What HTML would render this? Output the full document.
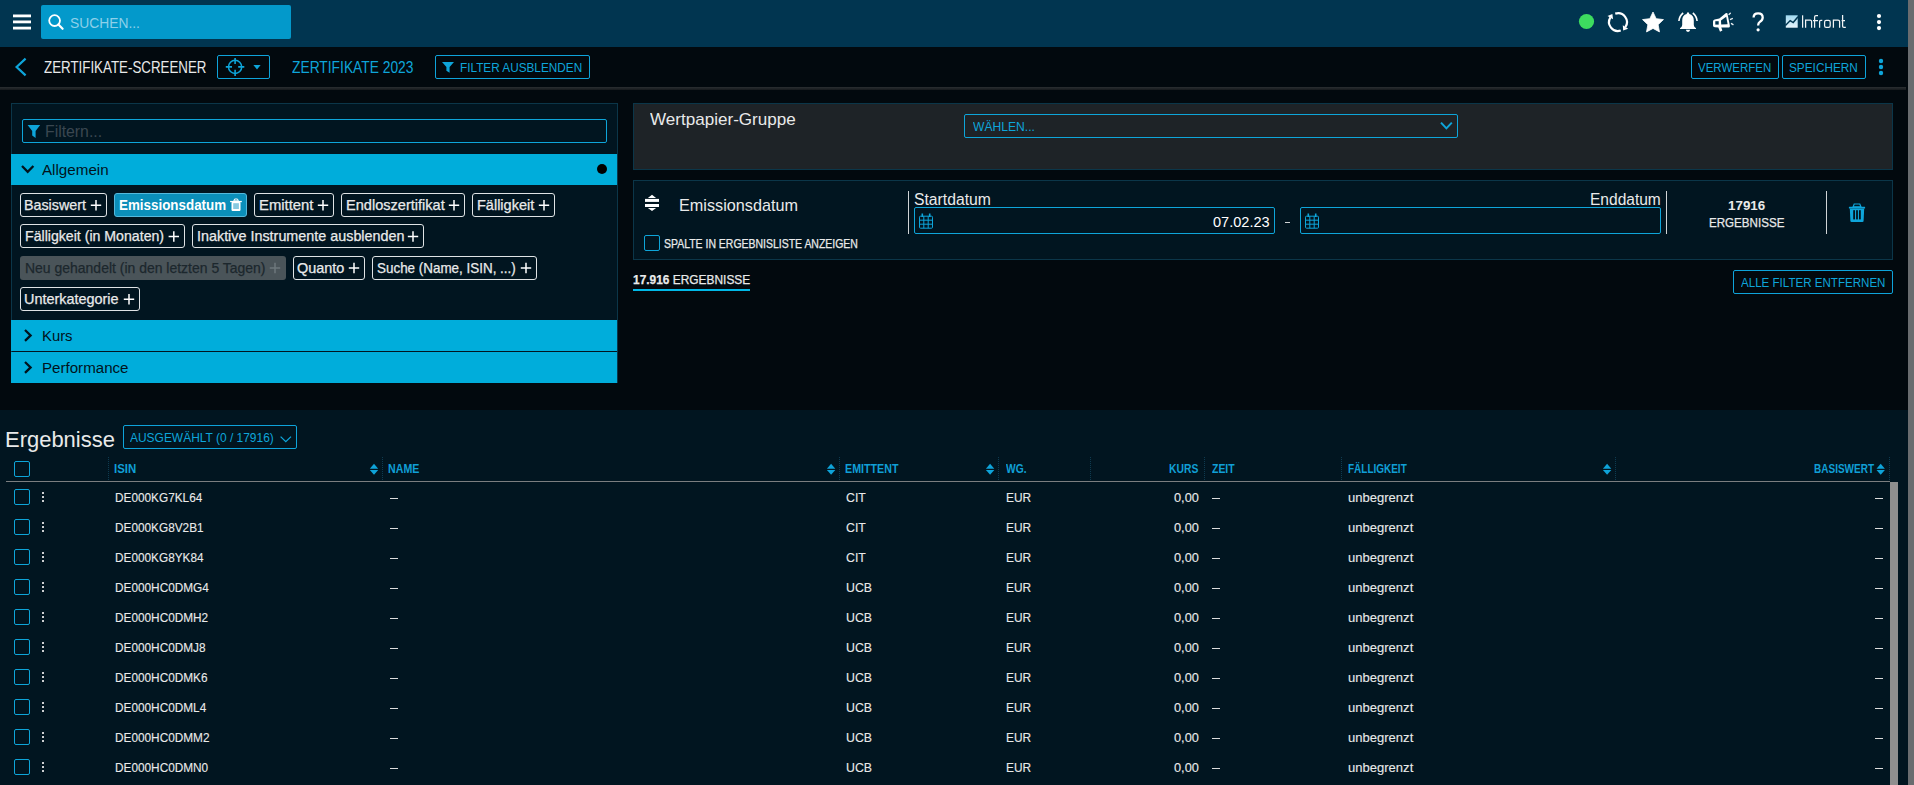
<!DOCTYPE html>
<html><head><meta charset="utf-8"><style>
html,body{margin:0;padding:0;width:1914px;height:785px;overflow:hidden;background:#02090e}
.b{position:absolute}
.t{position:absolute;white-space:pre;line-height:1;font-family:"Liberation Sans",sans-serif;transform-origin:0 0}
svg{position:absolute;left:0;top:0}
</style></head><body>
<div class="b" style="left:0px;top:0px;width:1908px;height:47px;background:#013550"></div><div class="b" style="left:41px;top:5px;width:250px;height:34px;background:#0399cb;border-radius:2px"></div><div class="b" style="left:0px;top:47px;width:1908px;height:40px;background:#02090e"></div><div class="b" style="left:0px;top:87px;width:1906px;height:3px;background:linear-gradient(#2b2f32,#15191c)"></div><div class="b" style="left:0px;top:90px;width:1908px;height:320px;background:#02090e"></div><div class="b" style="left:0px;top:410px;width:1908px;height:375px;background:#011520"></div><div class="b" style="left:1908px;top:0px;width:6px;height:785px;background:#696c6f"></div><div class="b" style="left:217px;top:55px;width:53px;height:24px;border:1.5px solid #0ea3da;border-radius:2px;box-sizing:border-box"></div><div class="b" style="left:435px;top:55px;width:155px;height:24px;border:1.5px solid #0ea3da;border-radius:2px;box-sizing:border-box"></div><div class="b" style="left:1691px;top:55px;width:88px;height:24px;border:1.5px solid #0ea3da;border-radius:2px;box-sizing:border-box"></div><div class="b" style="left:1782px;top:55px;width:84px;height:24px;border:1.5px solid #0ea3da;border-radius:2px;box-sizing:border-box"></div><div class="b" style="left:11px;top:103px;width:607px;height:280px;background:#011520;border:1px solid #0b3649;box-sizing:border-box"></div><div class="b" style="left:22px;top:119px;width:585px;height:24px;border:1.5px solid #0ea5d9;border-radius:2px;box-sizing:border-box"></div><div class="b" style="left:11px;top:154px;width:606px;height:31px;background:#00addb"></div><div class="b" style="left:11px;top:320px;width:606px;height:31px;background:#00addb"></div><div class="b" style="left:11px;top:352px;width:606px;height:31px;background:#00addb"></div><div class="b" style="left:20px;top:193px;width:87px;height:24px;border:1px solid #dfe3e5;border-radius:3px;box-sizing:border-box"></div><div class="b" style="left:114px;top:193px;width:133px;height:24px;background:#0b8fba;border:1px solid #55b9dc;border-radius:3px;box-sizing:border-box"></div><div class="b" style="left:254px;top:193px;width:80px;height:24px;border:1px solid #dfe3e5;border-radius:3px;box-sizing:border-box"></div><div class="b" style="left:341px;top:193px;width:124px;height:24px;border:1px solid #dfe3e5;border-radius:3px;box-sizing:border-box"></div><div class="b" style="left:472px;top:193px;width:83px;height:24px;border:1px solid #dfe3e5;border-radius:3px;box-sizing:border-box"></div><div class="b" style="left:20px;top:224px;width:165px;height:24px;border:1px solid #dfe3e5;border-radius:3px;box-sizing:border-box"></div><div class="b" style="left:192px;top:224px;width:232px;height:24px;border:1px solid #dfe3e5;border-radius:3px;box-sizing:border-box"></div><div class="b" style="left:20px;top:256px;width:266px;height:24px;background:#4a5459;border-radius:3px"></div><div class="b" style="left:293px;top:256px;width:72px;height:24px;border:1px solid #dfe3e5;border-radius:3px;box-sizing:border-box"></div><div class="b" style="left:372px;top:256px;width:165px;height:24px;border:1px solid #dfe3e5;border-radius:3px;box-sizing:border-box"></div><div class="b" style="left:20px;top:287px;width:120px;height:24px;border:1px solid #dfe3e5;border-radius:3px;box-sizing:border-box"></div><div class="b" style="left:633px;top:103px;width:1260px;height:67px;background:#1e2327;border:1px solid #0b3649;box-sizing:border-box"></div><div class="b" style="left:964px;top:114px;width:494px;height:24px;border:1.5px solid #0ea5d9;border-radius:2px;box-sizing:border-box"></div><div class="b" style="left:633px;top:180px;width:1260px;height:80px;background:#011520;border:1px solid #0b3649;box-sizing:border-box"></div><div class="b" style="left:908px;top:191px;width:1px;height:43px;background:#d0d4d6"></div><div class="b" style="left:1666px;top:191px;width:1px;height:43px;background:#d0d4d6"></div><div class="b" style="left:1826px;top:191px;width:1px;height:43px;background:#d0d4d6"></div><div class="b" style="left:914px;top:207px;width:361px;height:27px;border:1.5px solid #0ea5d9;border-radius:2px;box-sizing:border-box"></div><div class="b" style="left:1300px;top:207px;width:361px;height:27px;border:1.5px solid #0ea5d9;border-radius:2px;box-sizing:border-box"></div><div class="b" style="left:1285px;top:222px;width:5px;height:1px;background:#cfd3d5"></div><div class="b" style="left:644px;top:235px;width:16px;height:16px;border:1.5px solid #0ea5d9;border-radius:2px;box-sizing:border-box"></div><div class="b" style="left:633px;top:289px;width:117px;height:2px;background:#00b9e8"></div><div class="b" style="left:1733px;top:270px;width:160px;height:24px;border:1.5px solid #0ea3da;border-radius:2px;box-sizing:border-box"></div><div class="b" style="left:123px;top:425px;width:174px;height:24px;border:1.5px solid #0ea3da;border-radius:2px;box-sizing:border-box"></div><div class="b" style="left:14px;top:461px;width:16px;height:16px;border:1.5px solid #0ea5d9;border-radius:2px;box-sizing:border-box"></div><div class="b" style="left:6px;top:481px;width:1884px;height:1px;background:#7b7e80"></div><div class="b" style="left:1890px;top:482px;width:8px;height:303px;background:#8f8f8f"></div><div class="b" style="left:108px;top:457px;width:1px;height:24px;background:repeating-linear-gradient(#0e3b50 0 1px,transparent 1px 2px)"></div><div class="b" style="left:382px;top:457px;width:1px;height:24px;background:repeating-linear-gradient(#0e3b50 0 1px,transparent 1px 2px)"></div><div class="b" style="left:839px;top:457px;width:1px;height:24px;background:repeating-linear-gradient(#0e3b50 0 1px,transparent 1px 2px)"></div><div class="b" style="left:998px;top:457px;width:1px;height:24px;background:repeating-linear-gradient(#0e3b50 0 1px,transparent 1px 2px)"></div><div class="b" style="left:1090px;top:457px;width:1px;height:24px;background:repeating-linear-gradient(#0e3b50 0 1px,transparent 1px 2px)"></div><div class="b" style="left:1204px;top:457px;width:1px;height:24px;background:repeating-linear-gradient(#0e3b50 0 1px,transparent 1px 2px)"></div><div class="b" style="left:1341px;top:457px;width:1px;height:24px;background:repeating-linear-gradient(#0e3b50 0 1px,transparent 1px 2px)"></div><div class="b" style="left:1615px;top:457px;width:1px;height:24px;background:repeating-linear-gradient(#0e3b50 0 1px,transparent 1px 2px)"></div><div class="b" style="left:1889px;top:457px;width:1px;height:24px;background:repeating-linear-gradient(#0e3b50 0 1px,transparent 1px 2px)"></div><div class="b" style="left:14px;top:489px;width:16px;height:16px;border:1.5px solid #0ea5d9;border-radius:2px;box-sizing:border-box"></div><div class="b" style="left:41.8px;top:491.8px;width:2.6px;height:2.6px;background:#f4f4f4;border-radius:0.8px"></div><div class="b" style="left:41.8px;top:495.8px;width:2.6px;height:2.6px;background:#f4f4f4;border-radius:0.8px"></div><div class="b" style="left:41.8px;top:499.8px;width:2.6px;height:2.6px;background:#f4f4f4;border-radius:0.8px"></div><div class="b" style="left:390px;top:498px;width:8px;height:1.3px;background:#dcdcdc"></div><div class="b" style="left:1212px;top:498px;width:8px;height:1.3px;background:#dcdcdc"></div><div class="b" style="left:1875px;top:498px;width:8px;height:1.3px;background:#dcdcdc"></div><div class="b" style="left:14px;top:519px;width:16px;height:16px;border:1.5px solid #0ea5d9;border-radius:2px;box-sizing:border-box"></div><div class="b" style="left:41.8px;top:521.8px;width:2.6px;height:2.6px;background:#f4f4f4;border-radius:0.8px"></div><div class="b" style="left:41.8px;top:525.8px;width:2.6px;height:2.6px;background:#f4f4f4;border-radius:0.8px"></div><div class="b" style="left:41.8px;top:529.8px;width:2.6px;height:2.6px;background:#f4f4f4;border-radius:0.8px"></div><div class="b" style="left:390px;top:528px;width:8px;height:1.3px;background:#dcdcdc"></div><div class="b" style="left:1212px;top:528px;width:8px;height:1.3px;background:#dcdcdc"></div><div class="b" style="left:1875px;top:528px;width:8px;height:1.3px;background:#dcdcdc"></div><div class="b" style="left:14px;top:549px;width:16px;height:16px;border:1.5px solid #0ea5d9;border-radius:2px;box-sizing:border-box"></div><div class="b" style="left:41.8px;top:551.8px;width:2.6px;height:2.6px;background:#f4f4f4;border-radius:0.8px"></div><div class="b" style="left:41.8px;top:555.8px;width:2.6px;height:2.6px;background:#f4f4f4;border-radius:0.8px"></div><div class="b" style="left:41.8px;top:559.8px;width:2.6px;height:2.6px;background:#f4f4f4;border-radius:0.8px"></div><div class="b" style="left:390px;top:558px;width:8px;height:1.3px;background:#dcdcdc"></div><div class="b" style="left:1212px;top:558px;width:8px;height:1.3px;background:#dcdcdc"></div><div class="b" style="left:1875px;top:558px;width:8px;height:1.3px;background:#dcdcdc"></div><div class="b" style="left:14px;top:579px;width:16px;height:16px;border:1.5px solid #0ea5d9;border-radius:2px;box-sizing:border-box"></div><div class="b" style="left:41.8px;top:581.8px;width:2.6px;height:2.6px;background:#f4f4f4;border-radius:0.8px"></div><div class="b" style="left:41.8px;top:585.8px;width:2.6px;height:2.6px;background:#f4f4f4;border-radius:0.8px"></div><div class="b" style="left:41.8px;top:589.8px;width:2.6px;height:2.6px;background:#f4f4f4;border-radius:0.8px"></div><div class="b" style="left:390px;top:588px;width:8px;height:1.3px;background:#dcdcdc"></div><div class="b" style="left:1212px;top:588px;width:8px;height:1.3px;background:#dcdcdc"></div><div class="b" style="left:1875px;top:588px;width:8px;height:1.3px;background:#dcdcdc"></div><div class="b" style="left:14px;top:609px;width:16px;height:16px;border:1.5px solid #0ea5d9;border-radius:2px;box-sizing:border-box"></div><div class="b" style="left:41.8px;top:611.8px;width:2.6px;height:2.6px;background:#f4f4f4;border-radius:0.8px"></div><div class="b" style="left:41.8px;top:615.8px;width:2.6px;height:2.6px;background:#f4f4f4;border-radius:0.8px"></div><div class="b" style="left:41.8px;top:619.8px;width:2.6px;height:2.6px;background:#f4f4f4;border-radius:0.8px"></div><div class="b" style="left:390px;top:618px;width:8px;height:1.3px;background:#dcdcdc"></div><div class="b" style="left:1212px;top:618px;width:8px;height:1.3px;background:#dcdcdc"></div><div class="b" style="left:1875px;top:618px;width:8px;height:1.3px;background:#dcdcdc"></div><div class="b" style="left:14px;top:639px;width:16px;height:16px;border:1.5px solid #0ea5d9;border-radius:2px;box-sizing:border-box"></div><div class="b" style="left:41.8px;top:641.8px;width:2.6px;height:2.6px;background:#f4f4f4;border-radius:0.8px"></div><div class="b" style="left:41.8px;top:645.8px;width:2.6px;height:2.6px;background:#f4f4f4;border-radius:0.8px"></div><div class="b" style="left:41.8px;top:649.8px;width:2.6px;height:2.6px;background:#f4f4f4;border-radius:0.8px"></div><div class="b" style="left:390px;top:648px;width:8px;height:1.3px;background:#dcdcdc"></div><div class="b" style="left:1212px;top:648px;width:8px;height:1.3px;background:#dcdcdc"></div><div class="b" style="left:1875px;top:648px;width:8px;height:1.3px;background:#dcdcdc"></div><div class="b" style="left:14px;top:669px;width:16px;height:16px;border:1.5px solid #0ea5d9;border-radius:2px;box-sizing:border-box"></div><div class="b" style="left:41.8px;top:671.8px;width:2.6px;height:2.6px;background:#f4f4f4;border-radius:0.8px"></div><div class="b" style="left:41.8px;top:675.8px;width:2.6px;height:2.6px;background:#f4f4f4;border-radius:0.8px"></div><div class="b" style="left:41.8px;top:679.8px;width:2.6px;height:2.6px;background:#f4f4f4;border-radius:0.8px"></div><div class="b" style="left:390px;top:678px;width:8px;height:1.3px;background:#dcdcdc"></div><div class="b" style="left:1212px;top:678px;width:8px;height:1.3px;background:#dcdcdc"></div><div class="b" style="left:1875px;top:678px;width:8px;height:1.3px;background:#dcdcdc"></div><div class="b" style="left:14px;top:699px;width:16px;height:16px;border:1.5px solid #0ea5d9;border-radius:2px;box-sizing:border-box"></div><div class="b" style="left:41.8px;top:701.8px;width:2.6px;height:2.6px;background:#f4f4f4;border-radius:0.8px"></div><div class="b" style="left:41.8px;top:705.8px;width:2.6px;height:2.6px;background:#f4f4f4;border-radius:0.8px"></div><div class="b" style="left:41.8px;top:709.8px;width:2.6px;height:2.6px;background:#f4f4f4;border-radius:0.8px"></div><div class="b" style="left:390px;top:708px;width:8px;height:1.3px;background:#dcdcdc"></div><div class="b" style="left:1212px;top:708px;width:8px;height:1.3px;background:#dcdcdc"></div><div class="b" style="left:1875px;top:708px;width:8px;height:1.3px;background:#dcdcdc"></div><div class="b" style="left:14px;top:729px;width:16px;height:16px;border:1.5px solid #0ea5d9;border-radius:2px;box-sizing:border-box"></div><div class="b" style="left:41.8px;top:731.8px;width:2.6px;height:2.6px;background:#f4f4f4;border-radius:0.8px"></div><div class="b" style="left:41.8px;top:735.8px;width:2.6px;height:2.6px;background:#f4f4f4;border-radius:0.8px"></div><div class="b" style="left:41.8px;top:739.8px;width:2.6px;height:2.6px;background:#f4f4f4;border-radius:0.8px"></div><div class="b" style="left:390px;top:738px;width:8px;height:1.3px;background:#dcdcdc"></div><div class="b" style="left:1212px;top:738px;width:8px;height:1.3px;background:#dcdcdc"></div><div class="b" style="left:1875px;top:738px;width:8px;height:1.3px;background:#dcdcdc"></div><div class="b" style="left:14px;top:759px;width:16px;height:16px;border:1.5px solid #0ea5d9;border-radius:2px;box-sizing:border-box"></div><div class="b" style="left:41.8px;top:761.8px;width:2.6px;height:2.6px;background:#f4f4f4;border-radius:0.8px"></div><div class="b" style="left:41.8px;top:765.8px;width:2.6px;height:2.6px;background:#f4f4f4;border-radius:0.8px"></div><div class="b" style="left:41.8px;top:769.8px;width:2.6px;height:2.6px;background:#f4f4f4;border-radius:0.8px"></div><div class="b" style="left:390px;top:768px;width:8px;height:1.3px;background:#dcdcdc"></div><div class="b" style="left:1212px;top:768px;width:8px;height:1.3px;background:#dcdcdc"></div><div class="b" style="left:1875px;top:768px;width:8px;height:1.3px;background:#dcdcdc"></div>
<svg width="1914" height="785" viewBox="0 0 1914 785"><rect x="13" y="14.5" width="18" height="2.8" fill="#ffffff"/><rect x="13" y="20.5" width="18" height="2.8" fill="#ffffff"/><rect x="13" y="26.7" width="18" height="2.8" fill="#ffffff"/><circle cx="54.6" cy="20.6" r="5.4" fill="none" stroke="#ffffff" stroke-width="1.8"/><line x1="58.4" y1="24.5" x2="62.6" y2="28.8" stroke="#ffffff" stroke-width="2.2" stroke-linecap="round"/><circle cx="1586.5" cy="21.5" r="7.6" fill="#3ddc5f"/><path d="M1615.25,13.64 A8.9,8.9 0 0 1 1625.29,27.20 M1620.75,30.56 A8.9,8.9 0 0 1 1610.45,17.38" fill="none" stroke="#ffffff" stroke-width="2.2"/><polygon points="1623.18,30.47 1628.15,28.69 1622.78,25.20" fill="#ffffff"/><polygon points="1612.39,14.01 1607.52,16.05 1613.06,19.25" fill="#ffffff"/><polygon points="1653.00,12.00 1656.17,18.63 1663.46,19.60 1658.14,24.67 1659.47,31.90 1653.00,28.40 1646.53,31.90 1647.86,24.67 1642.54,19.60 1649.83,18.63" fill="#ffffff" stroke="#ffffff" stroke-width="0.8" stroke-linejoin="round"/><path d="M1688,12.2 Q1689.3,12.2 1689.3,14 Q1693.8,15.2 1693.8,20.5 L1693.8,25 Q1693.8,26.8 1696,28.2 L1696,29 L1680,29 L1680,28.2 Q1682.2,26.8 1682.2,25 L1682.2,20.5 Q1682.2,15.2 1686.7,14 Q1686.7,12.2 1688,12.2 Z" fill="#ffffff"/><path d="M1685.9,29.8 L1690.1,29.8 Q1690,31.9 1688,31.9 Q1686,31.9 1685.9,29.8 Z" fill="#ffffff"/><path d="M1683.2,13 Q1679.4,15.8 1678.9,21" fill="none" stroke="#ffffff" stroke-width="1.6"/><path d="M1692.8,13 Q1696.6,15.8 1697.1,21" fill="none" stroke="#ffffff" stroke-width="1.6"/><path d="M1713,21.6 Q1713,19.9 1714.6,19.6 L1719.3,18.6 L1726,13 L1727.4,13.3 L1730,26.3 L1729.2,27.4 L1721.3,27.4 L1722.4,30.6 L1720,31.7 L1718.3,27.4 L1714.8,27.2 Q1713,27 1713,25.4 Z" fill="#ffffff"/><rect x="1715.3" y="21.2" width="3.4" height="3.4" fill="#013550"/><polygon points="1721,20.6 1726.2,16.8 1727.6,24.3 1721.2,24.4" fill="#013550"/><line x1="1729" y1="14.4" x2="1730.3" y2="13.2" stroke="#e8eef2" stroke-width="1.4" stroke-linecap="round"/><line x1="1730.5" y1="19.4" x2="1732.3" y2="18.6" stroke="#e8eef2" stroke-width="1.4" stroke-linecap="round"/><line x1="1731.5" y1="23.6" x2="1733" y2="24.6" stroke="#e8eef2" stroke-width="1.4" stroke-linecap="round"/><path d="M1753.6,17.6 Q1753.6,13.4 1758.1,13.4 Q1762.7,13.4 1762.7,17.5 Q1762.7,20.2 1760,21.7 Q1758.1,22.8 1758.1,25.6" fill="none" stroke="#ffffff" stroke-width="2.3"/><circle cx="1758.1" cy="29.8" r="1.6" fill="#ffffff"/><defs><linearGradient id="lg" x1="0" y1="0" x2="0" y2="1"><stop offset="0" stop-color="#9fd8ef"/><stop offset="1" stop-color="#e9f5fb"/></linearGradient></defs><rect x="1785.8" y="15.3" width="11.9" height="12.4" fill="url(#lg)"/><polyline points="1785.4,25.6 1790.2,20.6 1793.2,22.6 1798,16.8" fill="none" stroke="#013550" stroke-width="1.5"/><g fill="none" stroke="#f2f4f5" stroke-width="1.25"><path d="M1802.6,15.3 V27.7"/><path d="M1805.6,27.7 V20.2 H1810.2 Q1811.6,20.2 1811.6,21.6 V27.7"/><path d="M1818,15.7 H1816 Q1814.6,15.7 1814.6,17.1 V27.7 M1813,20.6 H1818"/><path d="M1819.6,27.7 V21.6 Q1819.6,20.4 1820.8,20.4 H1822.3"/><rect x="1824.6" y="20.4" width="5.6" height="7" rx="1.6"/><path d="M1833.4,27.7 V20.2 H1838 Q1839.6,20.2 1839.6,21.6 V27.7"/><path d="M1842.6,15.1 V26.3 Q1842.6,27.4 1844,27.4 H1845.8 M1841.6,20.6 H1845"/></g><circle cx="1879" cy="16" r="2.1" fill="#ffffff"/><circle cx="1879" cy="22.1" r="2.1" fill="#ffffff"/><circle cx="1879" cy="28.1" r="2.1" fill="#ffffff"/><polyline points="25.6,58.6 16.6,67 25.6,75.4" fill="none" stroke="#0ea5da" stroke-width="2.2"/><circle cx="235.1" cy="66.9" r="6.6" fill="none" stroke="#0ea5da" stroke-width="1.5"/><path d="M235.1,57.9 V64 M235.1,69.8 V75.9 M225.8,66.9 H232 M238.2,66.9 H244.3" stroke="#0ea5da" stroke-width="1.6"/><polygon points="253.4,65 260.6,65 257,69.6" fill="#0ea5da"/><polygon points="442,62 454,62 449.6,67 449.6,72.8 446.4,70.8 446.4,67" fill="#0ea5da"/><circle cx="1881" cy="61" r="2.2" fill="#0ea5da"/><circle cx="1881" cy="67" r="2.2" fill="#0ea5da"/><circle cx="1881" cy="73" r="2.2" fill="#0ea5da"/><polygon points="27.6,125 40.2,125 35.6,131 35.6,138 32.2,135.6 32.2,131" fill="#0ea5da"/><polyline points="22,166 27.7,171.8 33.4,166" fill="none" stroke="#02131c" stroke-width="2.3"/><circle cx="602" cy="169" r="5" fill="#000"/><polyline points="25,330 30.6,335.4 25,340.8" fill="none" stroke="#02131c" stroke-width="2.3"/><polyline points="25,362 30.6,367.4 25,372.8" fill="none" stroke="#02131c" stroke-width="2.3"/><path d="M90.8,205.3 H101.2 M96,200.10000000000002 V210.5" stroke="#ffffff" stroke-width="1.5"/><path d="M317.8,205.3 H328.2 M323,200.10000000000002 V210.5" stroke="#ffffff" stroke-width="1.5"/><path d="M448.8,205.3 H459.2 M454,200.10000000000002 V210.5" stroke="#ffffff" stroke-width="1.5"/><path d="M538.8,205.3 H549.2 M544,200.10000000000002 V210.5" stroke="#ffffff" stroke-width="1.5"/><path d="M168.60000000000002,236.5 H179.0 M173.8,231.3 V241.7" stroke="#ffffff" stroke-width="1.5"/><path d="M407.8,236.5 H418.2 M413,231.3 V241.7" stroke="#ffffff" stroke-width="1.5"/><path d="M269.8,268 H280.2 M275,262.8 V273.2" stroke="#6d777c" stroke-width="1.5"/><path d="M348.8,268 H359.2 M354,262.8 V273.2" stroke="#ffffff" stroke-width="1.5"/><path d="M520.8,268 H531.2 M526,262.8 V273.2" stroke="#ffffff" stroke-width="1.5"/><path d="M123.8,299.3 H134.2 M129,294.1 V304.5" stroke="#ffffff" stroke-width="1.5"/><g fill="#ffffff"><rect x="230.1" y="200.9" width="11.7" height="1.3"/><path d="M233.8,200.9 L234.6,199 H237.5 L238.3,200.9 Z" fill="none" stroke="#fff" stroke-width="1"/><rect x="231.5" y="202" width="9" height="8.9" rx="0.8"/></g><rect x="233.2" y="203.2" width="5.7" height="5.8" fill="#86c9e0"/><polyline points="1441,122.6 1446.4,128.4 1451.8,122.6" fill="none" stroke="#0ea5da" stroke-width="2"/><g fill="#ffffff"><polygon points="647.9,197.9 652,194.7 656.1,197.9"/><rect x="645" y="198.9" width="14" height="3"/><rect x="645" y="204" width="14" height="3"/><polygon points="647.9,207.9 656.1,207.9 652,211.1"/></g><g fill="none" stroke="#0ea5da" stroke-width="1"><rect x="919.5" y="216.2" width="13" height="12" rx="1"/><path d="M923.8,216.2 V228.2 M928.2,216.2 V228.2 M919.5,220.2 H932.5 M919.5,224.2 H932.5"/><path d="M922.3,217 V213.6 M929.7,217 V213.6" stroke-width="1.6"/></g><g fill="none" stroke="#0ea5da" stroke-width="1"><rect x="1305.5" y="216.2" width="13" height="12" rx="1"/><path d="M1309.8,216.2 V228.2 M1314.2,216.2 V228.2 M1305.5,220.2 H1318.5 M1305.5,224.2 H1318.5"/><path d="M1308.3,217 V213.6 M1315.7,217 V213.6" stroke-width="1.6"/></g><g fill="#0ea5da"><rect x="1848.9" y="206.8" width="16.2" height="1.7" rx="0.5"/><path d="M1853,206.9 L1854.2,204 H1859.8 L1861,206.9 Z" fill="none" stroke="#0ea5da" stroke-width="1.2"/><path d="M1849.8,208.4 H1864.2 L1863.6,221 Q1863.5,222 1862.5,222 H1851.5 Q1850.5,222 1850.4,221 Z"/></g><g fill="#011520"><rect x="1853.2" y="210.2" width="1.8" height="9.2"/><rect x="1856.1" y="210.2" width="1.8" height="9.2"/><rect x="1859" y="210.2" width="1.8" height="9.2"/></g><polyline points="280.6,436.6 285.8,441.6 291,436.6" fill="none" stroke="#0ea5da" stroke-width="1.3"/><polygon points="369.8,468.7 374.0,463.8 378.2,468.7" fill="#0ea3d9"/><polygon points="369.8,469.9 378.2,469.9 374.0,474.7" fill="#0ea3d9"/><polygon points="826.9,468.7 831.1,463.8 835.3,468.7" fill="#0ea3d9"/><polygon points="826.9,469.9 835.3,469.9 831.1,474.7" fill="#0ea3d9"/><polygon points="985.9,468.7 990.1,463.8 994.3,468.7" fill="#0ea3d9"/><polygon points="985.9,469.9 994.3,469.9 990.1,474.7" fill="#0ea3d9"/><polygon points="1602.9,468.7 1607.1000000000001,463.8 1611.3000000000002,468.7" fill="#0ea3d9"/><polygon points="1602.9,469.9 1611.3000000000002,469.9 1607.1000000000001,474.7" fill="#0ea3d9"/><polygon points="1876.5,468.7 1880.7,463.8 1884.9,468.7" fill="#0ea3d9"/><polygon points="1876.5,469.9 1884.9,469.9 1880.7,474.7" fill="#0ea3d9"/></svg>
<div class="t" style="left:69.60px;top:15.00px;font-size:15.3px;font-weight:400;color:#8ed0e9;transform:scaleX(0.9040);">SUCHEN...</div><div class="t" style="left:43.58px;top:59.00px;font-size:16.2px;font-weight:400;color:#e9eaea;transform:scaleX(0.8236);">ZERTIFIKATE-SCREENER</div><div class="t" style="left:291.61px;top:60.00px;font-size:15.6px;font-weight:400;color:#0ea5da;transform:scaleX(0.8852);">ZERTIFIKATE 2023</div><div class="t" style="left:459.73px;top:61.30px;font-size:13.6px;font-weight:400;color:#0ea5da;transform:scaleX(0.8662);">FILTER AUSBLENDEN</div><div class="t" style="left:1698.30px;top:61.20px;font-size:13.4px;font-weight:400;color:#0ea5da;transform:scaleX(0.8595);">VERWERFEN</div><div class="t" style="left:1789.12px;top:61.20px;font-size:13.4px;font-weight:400;color:#0ea5da;transform:scaleX(0.8816);">SPEICHERN</div><div class="t" style="left:44.51px;top:124.10px;font-size:16px;font-weight:400;color:#3a4750;transform:scaleX(0.9873);">Filtern...</div><div class="t" style="left:42.00px;top:161.70px;font-size:15.5px;font-weight:400;color:#02131c;transform:scaleX(0.9791);">Allgemein</div><div class="t" style="left:41.74px;top:327.80px;font-size:15.5px;font-weight:400;color:#02131c;transform:scaleX(0.9567);">Kurs</div><div class="t" style="left:41.73px;top:359.70px;font-size:15.5px;font-weight:400;color:#02131c;transform:scaleX(0.9747);">Performance</div><div class="t" style="left:24.49px;top:198.00px;font-size:14.2px;font-weight:400;color:#e9eaea;transform:scaleX(1.0067);-webkit-text-stroke:0.25px currentColor">Basiswert</div><div class="t" style="left:118.86px;top:198.00px;font-size:14.2px;font-weight:700;color:#ffffff;transform:scaleX(0.9437);">Emissionsdatum</div><div class="t" style="left:258.65px;top:198.00px;font-size:14.2px;font-weight:400;color:#e9eaea;transform:scaleX(1.0451);-webkit-text-stroke:0.25px currentColor">Emittent</div><div class="t" style="left:345.87px;top:198.00px;font-size:14.2px;font-weight:400;color:#e9eaea;transform:scaleX(1.0263);-webkit-text-stroke:0.25px currentColor">Endloszertifikat</div><div class="t" style="left:476.98px;top:198.00px;font-size:14.2px;font-weight:400;color:#e9eaea;transform:scaleX(1.0218);-webkit-text-stroke:0.25px currentColor">F&auml;lligkeit</div><div class="t" style="left:24.50px;top:229.00px;font-size:14.2px;font-weight:400;color:#e9eaea;transform:scaleX(0.9964);-webkit-text-stroke:0.25px currentColor">F&auml;lligkeit (in Monaten)</div><div class="t" style="left:196.59px;top:229.00px;font-size:14.2px;font-weight:400;color:#e9eaea;transform:scaleX(1.0118);-webkit-text-stroke:0.25px currentColor">Inaktive Instrumente ausblenden</div><div class="t" style="left:24.52px;top:261.00px;font-size:14.2px;font-weight:400;color:#1c272d;transform:scaleX(0.9847);-webkit-text-stroke:0.25px currentColor">Neu gehandelt (in den letzten 5 Tagen)</div><div class="t" style="left:296.98px;top:261.00px;font-size:14.2px;font-weight:400;color:#e9eaea;transform:scaleX(1.0178);-webkit-text-stroke:0.25px currentColor">Quanto</div><div class="t" style="left:376.85px;top:261.00px;font-size:14.2px;font-weight:400;color:#e9eaea;transform:scaleX(0.9462);-webkit-text-stroke:0.25px currentColor">Suche (Name, ISIN, ...)</div><div class="t" style="left:24.48px;top:292.00px;font-size:14.2px;font-weight:400;color:#e9eaea;transform:scaleX(1.0163);-webkit-text-stroke:0.25px currentColor">Unterkategorie</div><div class="t" style="left:649.50px;top:111.90px;font-size:16.6px;font-weight:400;color:#e9eaea;transform:scaleX(1.0284);">Wertpapier-Gruppe</div><div class="t" style="left:973.00px;top:119.90px;font-size:13px;font-weight:400;color:#0ea5da;transform:scaleX(0.9323);">W&Auml;HLEN...</div><div class="t" style="left:678.80px;top:197.20px;font-size:16.2px;font-weight:400;color:#e9eaea;transform:scaleX(1.0017);">Emissionsdatum</div><div class="t" style="left:663.74px;top:238.00px;font-size:12.2px;font-weight:400;color:#e9eaea;transform:scaleX(0.8589);-webkit-text-stroke:0.25px currentColor">SPALTE IN ERGEBNISLISTE ANZEIGEN</div><div class="t" style="left:913.92px;top:192.00px;font-size:16px;font-weight:400;color:#e9eaea;transform:scaleX(0.9829);">Startdatum</div><div class="t" style="left:1213.00px;top:215.00px;font-size:14.5px;font-weight:400;color:#ffffff;transform:scaleX(1.0036);">07.02.23</div><div class="t" style="left:1590.43px;top:192.00px;font-size:16px;font-weight:400;color:#e9eaea;transform:scaleX(0.9704);">Enddatum</div><div class="t" style="left:1727.79px;top:199.00px;font-size:13.2px;font-weight:700;color:#e9eaea;transform:scaleX(1.0143);">17916</div><div class="t" style="left:1708.73px;top:216.20px;font-size:13.3px;font-weight:400;color:#e9eaea;transform:scaleX(0.8718);-webkit-text-stroke:0.25px currentColor">ERGEBNISSE</div><div class="t" style="left:632.68px;top:272.90px;font-size:13px;font-weight:400;color:#e9eaea;transform:scaleX(0.9165);-webkit-text-stroke:0.25px currentColor"><b>17.916</b> ERGEBNISSE</div><div class="t" style="left:1740.50px;top:277.20px;font-size:12.8px;font-weight:400;color:#0ea5da;transform:scaleX(0.9044);">ALLE FILTER ENTFERNEN</div><div class="t" style="left:5.37px;top:427.80px;font-size:22.8px;font-weight:400;color:#e9eaea;transform:scaleX(0.9631);">Ergebnisse</div><div class="t" style="left:130.00px;top:431.00px;font-size:13px;font-weight:400;color:#0ea5da;transform:scaleX(0.9200);">AUSGEW&Auml;HLT (0 / 17916)</div><div class="t" style="left:114.46px;top:462.80px;font-size:12.2px;font-weight:700;color:#109fd6;transform:scaleX(0.9364);">ISIN</div><div class="t" style="left:388.43px;top:462.80px;font-size:12.2px;font-weight:700;color:#109fd6;transform:scaleX(0.8735);">NAME</div><div class="t" style="left:845.32px;top:462.80px;font-size:12.2px;font-weight:700;color:#109fd6;transform:scaleX(0.8767);">EMITTENT</div><div class="t" style="left:1005.80px;top:462.80px;font-size:12.2px;font-weight:700;color:#109fd6;transform:scaleX(0.8417);">WG.</div><div class="t" style="left:1168.65px;top:462.80px;font-size:12.2px;font-weight:700;color:#109fd6;transform:scaleX(0.8515);">KURS</div><div class="t" style="left:1211.70px;top:462.80px;font-size:12.2px;font-weight:700;color:#109fd6;transform:scaleX(0.8577);">ZEIT</div><div class="t" style="left:1347.88px;top:462.80px;font-size:12.2px;font-weight:700;color:#109fd6;transform:scaleX(0.8183);">F&Auml;LLIGKEIT</div><div class="t" style="left:1814.18px;top:462.80px;font-size:12.2px;font-weight:700;color:#109fd6;transform:scaleX(0.8222);">BASISWERT</div><div class="t" style="left:115.28px;top:491.60px;font-size:12.8px;font-weight:400;color:#e9eaea;transform:scaleX(0.9226);-webkit-text-stroke:0.1px currentColor">DE000KG7KL64</div><div class="t" style="left:845.94px;top:491.60px;font-size:12.8px;font-weight:400;color:#e9eaea;transform:scaleX(0.9632);-webkit-text-stroke:0.1px currentColor">CIT</div><div class="t" style="left:1006.07px;top:491.60px;font-size:12.8px;font-weight:400;color:#e9eaea;transform:scaleX(0.9320);-webkit-text-stroke:0.1px currentColor">EUR</div><div class="t" style="left:1174.00px;top:491.60px;font-size:12.8px;font-weight:400;color:#e9eaea;transform:scaleX(1.0000);-webkit-text-stroke:0.1px currentColor">0,00</div><div class="t" style="left:1348.48px;top:491.60px;font-size:12.8px;font-weight:400;color:#e9eaea;transform:scaleX(1.0190);-webkit-text-stroke:0.1px currentColor">unbegrenzt</div><div class="t" style="left:115.28px;top:521.60px;font-size:12.8px;font-weight:400;color:#e9eaea;transform:scaleX(0.9226);-webkit-text-stroke:0.1px currentColor">DE000KG8V2B1</div><div class="t" style="left:845.94px;top:521.60px;font-size:12.8px;font-weight:400;color:#e9eaea;transform:scaleX(0.9632);-webkit-text-stroke:0.1px currentColor">CIT</div><div class="t" style="left:1006.07px;top:521.60px;font-size:12.8px;font-weight:400;color:#e9eaea;transform:scaleX(0.9320);-webkit-text-stroke:0.1px currentColor">EUR</div><div class="t" style="left:1174.00px;top:521.60px;font-size:12.8px;font-weight:400;color:#e9eaea;transform:scaleX(1.0000);-webkit-text-stroke:0.1px currentColor">0,00</div><div class="t" style="left:1348.48px;top:521.60px;font-size:12.8px;font-weight:400;color:#e9eaea;transform:scaleX(1.0190);-webkit-text-stroke:0.1px currentColor">unbegrenzt</div><div class="t" style="left:115.28px;top:551.60px;font-size:12.8px;font-weight:400;color:#e9eaea;transform:scaleX(0.9226);-webkit-text-stroke:0.1px currentColor">DE000KG8YK84</div><div class="t" style="left:845.94px;top:551.60px;font-size:12.8px;font-weight:400;color:#e9eaea;transform:scaleX(0.9632);-webkit-text-stroke:0.1px currentColor">CIT</div><div class="t" style="left:1006.07px;top:551.60px;font-size:12.8px;font-weight:400;color:#e9eaea;transform:scaleX(0.9320);-webkit-text-stroke:0.1px currentColor">EUR</div><div class="t" style="left:1174.00px;top:551.60px;font-size:12.8px;font-weight:400;color:#e9eaea;transform:scaleX(1.0000);-webkit-text-stroke:0.1px currentColor">0,00</div><div class="t" style="left:1348.48px;top:551.60px;font-size:12.8px;font-weight:400;color:#e9eaea;transform:scaleX(1.0190);-webkit-text-stroke:0.1px currentColor">unbegrenzt</div><div class="t" style="left:115.28px;top:581.60px;font-size:12.8px;font-weight:400;color:#e9eaea;transform:scaleX(0.9226);-webkit-text-stroke:0.1px currentColor">DE000HC0DMG4</div><div class="t" style="left:845.94px;top:581.60px;font-size:12.8px;font-weight:400;color:#e9eaea;transform:scaleX(0.9632);-webkit-text-stroke:0.1px currentColor">UCB</div><div class="t" style="left:1006.07px;top:581.60px;font-size:12.8px;font-weight:400;color:#e9eaea;transform:scaleX(0.9320);-webkit-text-stroke:0.1px currentColor">EUR</div><div class="t" style="left:1174.00px;top:581.60px;font-size:12.8px;font-weight:400;color:#e9eaea;transform:scaleX(1.0000);-webkit-text-stroke:0.1px currentColor">0,00</div><div class="t" style="left:1348.48px;top:581.60px;font-size:12.8px;font-weight:400;color:#e9eaea;transform:scaleX(1.0190);-webkit-text-stroke:0.1px currentColor">unbegrenzt</div><div class="t" style="left:115.28px;top:611.60px;font-size:12.8px;font-weight:400;color:#e9eaea;transform:scaleX(0.9226);-webkit-text-stroke:0.1px currentColor">DE000HC0DMH2</div><div class="t" style="left:845.94px;top:611.60px;font-size:12.8px;font-weight:400;color:#e9eaea;transform:scaleX(0.9632);-webkit-text-stroke:0.1px currentColor">UCB</div><div class="t" style="left:1006.07px;top:611.60px;font-size:12.8px;font-weight:400;color:#e9eaea;transform:scaleX(0.9320);-webkit-text-stroke:0.1px currentColor">EUR</div><div class="t" style="left:1174.00px;top:611.60px;font-size:12.8px;font-weight:400;color:#e9eaea;transform:scaleX(1.0000);-webkit-text-stroke:0.1px currentColor">0,00</div><div class="t" style="left:1348.48px;top:611.60px;font-size:12.8px;font-weight:400;color:#e9eaea;transform:scaleX(1.0190);-webkit-text-stroke:0.1px currentColor">unbegrenzt</div><div class="t" style="left:115.28px;top:641.60px;font-size:12.8px;font-weight:400;color:#e9eaea;transform:scaleX(0.9226);-webkit-text-stroke:0.1px currentColor">DE000HC0DMJ8</div><div class="t" style="left:845.94px;top:641.60px;font-size:12.8px;font-weight:400;color:#e9eaea;transform:scaleX(0.9632);-webkit-text-stroke:0.1px currentColor">UCB</div><div class="t" style="left:1006.07px;top:641.60px;font-size:12.8px;font-weight:400;color:#e9eaea;transform:scaleX(0.9320);-webkit-text-stroke:0.1px currentColor">EUR</div><div class="t" style="left:1174.00px;top:641.60px;font-size:12.8px;font-weight:400;color:#e9eaea;transform:scaleX(1.0000);-webkit-text-stroke:0.1px currentColor">0,00</div><div class="t" style="left:1348.48px;top:641.60px;font-size:12.8px;font-weight:400;color:#e9eaea;transform:scaleX(1.0190);-webkit-text-stroke:0.1px currentColor">unbegrenzt</div><div class="t" style="left:115.28px;top:671.60px;font-size:12.8px;font-weight:400;color:#e9eaea;transform:scaleX(0.9226);-webkit-text-stroke:0.1px currentColor">DE000HC0DMK6</div><div class="t" style="left:845.94px;top:671.60px;font-size:12.8px;font-weight:400;color:#e9eaea;transform:scaleX(0.9632);-webkit-text-stroke:0.1px currentColor">UCB</div><div class="t" style="left:1006.07px;top:671.60px;font-size:12.8px;font-weight:400;color:#e9eaea;transform:scaleX(0.9320);-webkit-text-stroke:0.1px currentColor">EUR</div><div class="t" style="left:1174.00px;top:671.60px;font-size:12.8px;font-weight:400;color:#e9eaea;transform:scaleX(1.0000);-webkit-text-stroke:0.1px currentColor">0,00</div><div class="t" style="left:1348.48px;top:671.60px;font-size:12.8px;font-weight:400;color:#e9eaea;transform:scaleX(1.0190);-webkit-text-stroke:0.1px currentColor">unbegrenzt</div><div class="t" style="left:115.28px;top:701.60px;font-size:12.8px;font-weight:400;color:#e9eaea;transform:scaleX(0.9226);-webkit-text-stroke:0.1px currentColor">DE000HC0DML4</div><div class="t" style="left:845.94px;top:701.60px;font-size:12.8px;font-weight:400;color:#e9eaea;transform:scaleX(0.9632);-webkit-text-stroke:0.1px currentColor">UCB</div><div class="t" style="left:1006.07px;top:701.60px;font-size:12.8px;font-weight:400;color:#e9eaea;transform:scaleX(0.9320);-webkit-text-stroke:0.1px currentColor">EUR</div><div class="t" style="left:1174.00px;top:701.60px;font-size:12.8px;font-weight:400;color:#e9eaea;transform:scaleX(1.0000);-webkit-text-stroke:0.1px currentColor">0,00</div><div class="t" style="left:1348.48px;top:701.60px;font-size:12.8px;font-weight:400;color:#e9eaea;transform:scaleX(1.0190);-webkit-text-stroke:0.1px currentColor">unbegrenzt</div><div class="t" style="left:115.28px;top:731.60px;font-size:12.8px;font-weight:400;color:#e9eaea;transform:scaleX(0.9226);-webkit-text-stroke:0.1px currentColor">DE000HC0DMM2</div><div class="t" style="left:845.94px;top:731.60px;font-size:12.8px;font-weight:400;color:#e9eaea;transform:scaleX(0.9632);-webkit-text-stroke:0.1px currentColor">UCB</div><div class="t" style="left:1006.07px;top:731.60px;font-size:12.8px;font-weight:400;color:#e9eaea;transform:scaleX(0.9320);-webkit-text-stroke:0.1px currentColor">EUR</div><div class="t" style="left:1174.00px;top:731.60px;font-size:12.8px;font-weight:400;color:#e9eaea;transform:scaleX(1.0000);-webkit-text-stroke:0.1px currentColor">0,00</div><div class="t" style="left:1348.48px;top:731.60px;font-size:12.8px;font-weight:400;color:#e9eaea;transform:scaleX(1.0190);-webkit-text-stroke:0.1px currentColor">unbegrenzt</div><div class="t" style="left:115.28px;top:761.60px;font-size:12.8px;font-weight:400;color:#e9eaea;transform:scaleX(0.9226);-webkit-text-stroke:0.1px currentColor">DE000HC0DMN0</div><div class="t" style="left:845.94px;top:761.60px;font-size:12.8px;font-weight:400;color:#e9eaea;transform:scaleX(0.9632);-webkit-text-stroke:0.1px currentColor">UCB</div><div class="t" style="left:1006.07px;top:761.60px;font-size:12.8px;font-weight:400;color:#e9eaea;transform:scaleX(0.9320);-webkit-text-stroke:0.1px currentColor">EUR</div><div class="t" style="left:1174.00px;top:761.60px;font-size:12.8px;font-weight:400;color:#e9eaea;transform:scaleX(1.0000);-webkit-text-stroke:0.1px currentColor">0,00</div><div class="t" style="left:1348.48px;top:761.60px;font-size:12.8px;font-weight:400;color:#e9eaea;transform:scaleX(1.0190);-webkit-text-stroke:0.1px currentColor">unbegrenzt</div>
</body></html>
